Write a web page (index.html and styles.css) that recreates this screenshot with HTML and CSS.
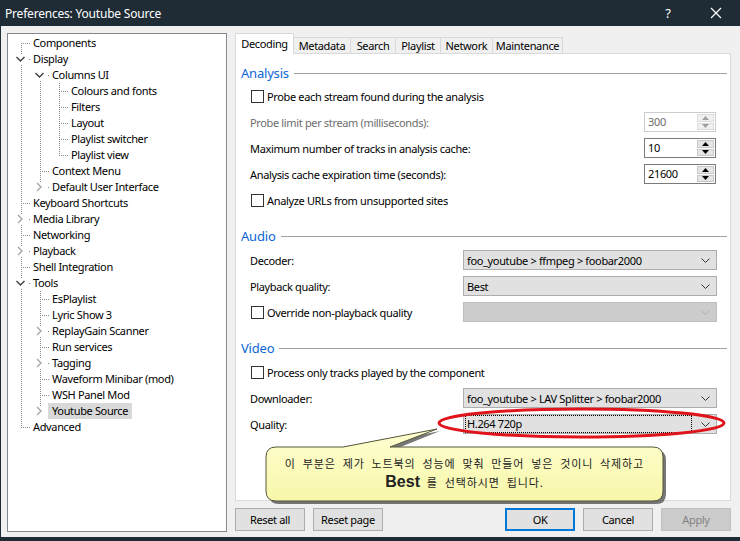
FILE: index.html
```html
<!DOCTYPE html>
<html>
<head>
<meta charset="utf-8">
<title>Preferences: Youtube Source</title>
<link rel="stylesheet" href="styles.css">
</head>
<body>
<div class="window">
  <div class="titlebar">
    <span class="title">Preferences: Youtube Source</span>
    <span class="tb-help">?</span>
    <svg class="tb-close" width="12" height="12" viewBox="0 0 12 12"><path d="M1 1L11 11M11 1L1 11" stroke="#fff" stroke-width="1.2"/></svg>
  </div>
  <div class="client">
    <div class="tree">
      <div class="row"><span class="g f"></span><span class="lbl">Components</span></div>
      <div class="row"><span class="g ch ct cb"><svg width="19" height="16"><polyline points="4.5,6 8.5,10 12.5,6" fill="none" stroke="#404040" stroke-width="1.4"/></svg></span><span class="lbl">Display</span></div>
      <div class="row"><span class="g v"></span><span class="g ch cb"><svg width="19" height="16"><polyline points="4.5,6 8.5,10 12.5,6" fill="none" stroke="#404040" stroke-width="1.4"/></svg></span><span class="lbl">Columns UI</span></div>
      <div class="row"><span class="g v"></span><span class="g v"></span><span class="g t"></span><span class="lbl">Colours and fonts</span></div>
      <div class="row"><span class="g v"></span><span class="g v"></span><span class="g t"></span><span class="lbl">Filters</span></div>
      <div class="row"><span class="g v"></span><span class="g v"></span><span class="g t"></span><span class="lbl">Layout</span></div>
      <div class="row"><span class="g v"></span><span class="g v"></span><span class="g t"></span><span class="lbl">Playlist switcher</span></div>
      <div class="row"><span class="g v"></span><span class="g v"></span><span class="g l"></span><span class="lbl">Playlist view</span></div>
      <div class="row"><span class="g v"></span><span class="g t"></span><span class="lbl">Context Menu</span></div>
      <div class="row"><span class="g v"></span><span class="g ch ct"><svg width="19" height="16"><polyline points="6,4 10,8 6,12" fill="none" stroke="#a6a6a6" stroke-width="1.4"/></svg></span><span class="lbl">Default User Interface</span></div>
      <div class="row"><span class="g t"></span><span class="lbl">Keyboard Shortcuts</span></div>
      <div class="row"><span class="g ch ct cb"><svg width="19" height="16"><polyline points="6,4 10,8 6,12" fill="none" stroke="#a6a6a6" stroke-width="1.4"/></svg></span><span class="lbl">Media Library</span></div>
      <div class="row"><span class="g t"></span><span class="lbl">Networking</span></div>
      <div class="row"><span class="g ch ct cb"><svg width="19" height="16"><polyline points="6,4 10,8 6,12" fill="none" stroke="#a6a6a6" stroke-width="1.4"/></svg></span><span class="lbl">Playback</span></div>
      <div class="row"><span class="g t"></span><span class="lbl">Shell Integration</span></div>
      <div class="row"><span class="g ch ct cb"><svg width="19" height="16"><polyline points="4.5,6 8.5,10 12.5,6" fill="none" stroke="#404040" stroke-width="1.4"/></svg></span><span class="lbl">Tools</span></div>
      <div class="row"><span class="g v"></span><span class="g t"></span><span class="lbl">EsPlaylist</span></div>
      <div class="row"><span class="g v"></span><span class="g t"></span><span class="lbl">Lyric Show 3</span></div>
      <div class="row"><span class="g v"></span><span class="g ch ct cb"><svg width="19" height="16"><polyline points="6,4 10,8 6,12" fill="none" stroke="#a6a6a6" stroke-width="1.4"/></svg></span><span class="lbl">ReplayGain Scanner</span></div>
      <div class="row"><span class="g v"></span><span class="g t"></span><span class="lbl">Run services</span></div>
      <div class="row"><span class="g v"></span><span class="g ch ct cb"><svg width="19" height="16"><polyline points="6,4 10,8 6,12" fill="none" stroke="#a6a6a6" stroke-width="1.4"/></svg></span><span class="lbl">Tagging</span></div>
      <div class="row"><span class="g v"></span><span class="g t"></span><span class="lbl">Waveform Minibar (mod)</span></div>
      <div class="row"><span class="g v"></span><span class="g t"></span><span class="lbl">WSH Panel Mod</span></div>
      <div class="row"><span class="g v"></span><span class="g ch ct"><svg width="19" height="16"><polyline points="6,4 10,8 6,12" fill="none" stroke="#a6a6a6" stroke-width="1.4"/></svg></span><span class="lbl sel">Youtube Source</span></div>
      <div class="row"><span class="g l"></span><span class="lbl">Advanced</span></div>
    </div>

    <div class="right">
      <div class="tabs">
        <div class="tab active w59">Decoding</div>
        <div class="tab w57">Metadata</div>
        <div class="tab w45">Search</div>
        <div class="tab w45">Playlist</div>
        <div class="tab w52">Network</div>
        <div class="tab w70">Maintenance</div>
      </div>
      <div class="panel">
        <div class="hdr first"><span class="hdr-t">Analysis</span><span class="hdr-line"></span></div>
        <div class="frow h25"><label class="chk"><span class="box"></span>Probe each stream found during the analysis</label></div>
        <div class="frow"><span class="lab dis">Probe limit per stream (milliseconds):</span>
          <div class="spin disabled"><span class="spin-val">300</span><span class="spin-btns"><span class="sb"><svg width="7" height="4"><polygon points="0,4 3.5,0 7,4" fill="#a0a0a0"/></svg></span><span class="sb"><svg width="7" height="4"><polygon points="0,0 3.5,4 7,0" fill="#a0a0a0"/></svg></span></span></div>
        </div>
        <div class="frow"><span class="lab">Maximum number of tracks in analysis cache:</span>
          <div class="spin"><span class="spin-val">10</span><span class="spin-btns"><span class="sb"><svg width="7" height="4"><polygon points="0,4 3.5,0 7,4" fill="#000"/></svg></span><span class="sb"><svg width="7" height="4"><polygon points="0,0 3.5,4 7,0" fill="#000"/></svg></span></span></div>
        </div>
        <div class="frow"><span class="lab">Analysis cache expiration time (seconds):</span>
          <div class="spin"><span class="spin-val">21600</span><span class="spin-btns"><span class="sb"><svg width="7" height="4"><polygon points="0,4 3.5,0 7,4" fill="#000"/></svg></span><span class="sb"><svg width="7" height="4"><polygon points="0,0 3.5,4 7,0" fill="#000"/></svg></span></span></div>
        </div>
        <div class="frow"><label class="chk"><span class="box"></span>Analyze URLs from unsupported sites</label></div>

        <div class="hdr"><span class="hdr-t">Audio</span><span class="hdr-line"></span></div>
        <div class="frow"><span class="lab">Decoder:</span>
          <div class="combo"><span class="combo-t">foo_youtube &gt; ffmpeg &gt; foobar2000</span><svg class="combo-arr" width="9" height="5"><polyline points="0.5,0.5 4.5,4.5 8.5,0.5" fill="none" stroke="#333"/></svg></div>
        </div>
        <div class="frow"><span class="lab">Playback quality:</span>
          <div class="combo"><span class="combo-t">Best</span><svg class="combo-arr" width="9" height="5"><polyline points="0.5,0.5 4.5,4.5 8.5,0.5" fill="none" stroke="#333"/></svg></div>
        </div>
        <div class="frow"><label class="chk"><span class="box"></span>Override non-playback quality</label>
          <div class="combo disabled"><span class="combo-t"></span><svg class="combo-arr" width="9" height="5"><polyline points="0.5,0.5 4.5,4.5 8.5,0.5" fill="none" stroke="#b0b0b0"/></svg></div>
        </div>

        <div class="hdr"><span class="hdr-t">Video</span><span class="hdr-line"></span></div>
        <div class="frow"><label class="chk"><span class="box"></span>Process only tracks played by the component</label></div>
        <div class="frow"><span class="lab">Downloader:</span>
          <div class="combo"><span class="combo-t">foo_youtube &gt; LAV Splitter &gt; foobar2000</span><svg class="combo-arr" width="9" height="5"><polyline points="0.5,0.5 4.5,4.5 8.5,0.5" fill="none" stroke="#333"/></svg></div>
        </div>
        <div class="frow"><span class="lab">Quality:</span>
          <div class="combo focus"><span class="combo-t">H.264 720p</span><svg class="combo-arr" width="9" height="5"><polyline points="0.5,0.5 4.5,4.5 8.5,0.5" fill="none" stroke="#333"/></svg></div>
        </div>
      </div>
      <div class="buttons">
        <button class="btn">Reset all</button>
        <button class="btn">Reset page</button>
        <span class="spacer"></span>
        <button class="btn default">OK</button>
        <button class="btn">Cancel</button>
        <button class="btn disabled">Apply</button>
      </div>
    </div>
  </div>

  <svg class="annot" width="740" height="541" viewBox="0 0 740 541">
    <defs>
      <linearGradient id="yel" x1="0" y1="0" x2="0" y2="1">
        <stop offset="0" stop-color="#ffffd2"/>
        <stop offset="1" stop-color="#f7f7aa"/>
      </linearGradient>
    </defs>
    <ellipse cx="581.5" cy="423" rx="142.5" ry="14" fill="none" stroke="#e0141b" stroke-width="3"/>
    <path d="M279 450 L346 450 L440 431 L393 450 L656 450 Q666 450 666 460 L666 494 Q666 504 656 504 L279 504 Q269 504 269 494 L269 460 Q269 450 279 450 Z" fill="#4a4a4a" opacity="0.75"/>
    <path d="M276 447 L343 447 L437 429 L390 447 L653 447 Q663 447 663 457 L663 491 Q663 501 653 501 L276 501 Q266 501 266 491 L266 457 Q266 447 276 447 Z" fill="url(#yel)" stroke="#55553a" stroke-width="1"/>
  </svg>
  <div class="callout-text">
    <div class="ct1">이 부분은 제가 노트북의 성능에 맞춰 만들어 넣은 것이니 삭제하고</div>
    <div class="ct2"><b>Best</b> 를 선택하시면 됩니다.</div>
  </div>
</div>
</body>
</html>
```

FILE: styles.css
```css
* { box-sizing: border-box; }
html, body { margin: 0; padding: 0; }
body {
  font-family: "Noto Sans", "Open Sans", sans-serif;
  font-size: 11px;
  letter-spacing: -0.35px;
  color: #000;
  background: #1f2c36;
}
.window {
  position: relative;
  width: 740px;
  height: 541px;
  background: #1f2c36;
  display: flex;
  flex-direction: column;
  overflow: hidden;
}
.titlebar {
  height: 26px;
  flex: none;
  display: flex;
  align-items: center;
  color: #fff;
  padding-left: 5px;
}
.title { font-size: 12px; flex: 1; letter-spacing: -0.2px; }
.tb-help { font-size: 13px; width: 14px; margin-right: 35px; text-align: center; }
.tb-close { margin-right: 18px; }

.client {
  flex: 1;
  margin: 0 0 4px 1px;
  background: #f0f0f0;
  display: grid;
  grid-template-columns: 220px 496px;
  column-gap: 8px;
  padding: 7px 0 0 6px;
}

/* tree */
.tree {
  height: 499px;
  background: #fff;
  border: 1px solid #828790;
  padding: 1px 0 0 4px;
}
.row { display: flex; height: 16px; align-items: center; white-space: nowrap; }
.g {
  flex: none;
  width: 19px;
  height: 16px;
  background-repeat: no-repeat;
}
.g svg { display: block; }
.v {
  background-image: repeating-linear-gradient(to bottom, #8a8a8a 0 1px, transparent 1px 2px);
  background-size: 1px 16px;
  background-position: 9px 0;
}
.t {
  background-image:
    repeating-linear-gradient(to bottom, #8a8a8a 0 1px, transparent 1px 2px),
    repeating-linear-gradient(to right, #8a8a8a 0 1px, transparent 1px 2px);
  background-size: 1px 16px, 9px 1px;
  background-position: 9px 0, 11px 8px;
}
.l {
  background-image:
    repeating-linear-gradient(to bottom, #8a8a8a 0 1px, transparent 1px 2px),
    repeating-linear-gradient(to right, #8a8a8a 0 1px, transparent 1px 2px);
  background-size: 1px 9px, 9px 1px;
  background-position: 9px 0, 11px 8px;
}
.f {
  background-image:
    repeating-linear-gradient(to bottom, #8a8a8a 0 1px, transparent 1px 2px),
    repeating-linear-gradient(to right, #8a8a8a 0 1px, transparent 1px 2px);
  background-size: 1px 8px, 9px 1px;
  background-position: 9px 8px, 11px 8px;
}
.ch {
  background-image: repeating-linear-gradient(to right, #8a8a8a 0 1px, transparent 1px 2px);
  background-size: 1px 1px;
  background-position: 17px 8px;
}
.ch.ct {
  background-image:
    repeating-linear-gradient(to right, #8a8a8a 0 1px, transparent 1px 2px),
    repeating-linear-gradient(to bottom, #8a8a8a 0 1px, transparent 1px 2px);
  background-size: 1px 1px, 1px 3px;
  background-position: 17px 8px, 9px 0;
}
.ch.cb {
  background-image:
    repeating-linear-gradient(to right, #8a8a8a 0 1px, transparent 1px 2px),
    repeating-linear-gradient(to bottom, #8a8a8a 0 1px, transparent 1px 2px);
  background-size: 1px 1px, 1px 3px;
  background-position: 17px 8px, 9px 14px;
}
.ch.ct.cb {
  background-image:
    repeating-linear-gradient(to right, #8a8a8a 0 1px, transparent 1px 2px),
    repeating-linear-gradient(to bottom, #8a8a8a 0 1px, transparent 1px 2px),
    repeating-linear-gradient(to bottom, #8a8a8a 0 1px, transparent 1px 2px);
  background-size: 1px 1px, 1px 3px, 1px 3px;
  background-position: 17px 8px, 9px 0, 9px 14px;
}
.lbl {
  margin-left: -2px;
  padding: 0 4px;
  height: 16px;
  line-height: 16px;
}
.lbl.sel { background: #d9d9d9; }

/* right side */
.right { display: flex; flex-direction: column; }
.tabs { display: flex; height: 20px; align-items: flex-end; position: relative; z-index: 1; }
.tab {
  height: 16px;
  border: 1px solid #d9d9d9;
  border-bottom: none;
  border-left: none;
  background: #f0f0f0;
  text-align: center;
  line-height: 15px;
}
.tab.active {
  height: 21px;
  margin-bottom: -1px;
  background: #fff;
  border-left: 1px solid #d9d9d9;
  line-height: 19px;
  padding-bottom: 2px;
}
.w59 { width: 59px; }
.w57 { width: 57px; }
.w45 { width: 45px; }
.w52 { width: 52px; }
.w70 { width: 70px; }

.panel {
  height: 448px;
  background: #fff;
  border: 1px solid #d9d9d9;
  padding: 8px 0 0 0;
  display: flex;
  flex-direction: column;
}
.hdr {
  display: flex;
  align-items: center;
  height: 22px;
  padding: 0 3px 0 5px;
  margin-top: 12px;
}
.hdr.first { margin-top: 0; }
.hdr-t { color: #0a66d6; font-size: 13px; letter-spacing: -0.2px; }
.hdr-line { flex: 1; height: 1px; background: #a0a0a0; margin-left: 5px; }

.frow {
  display: flex;
  align-items: center;
  justify-content: space-between;
  height: 26px;
  padding: 0 13px 0 14px;
  flex: none;
}
.frow.h25 { height: 25px; }
.lab.dis { color: #6d6d6d; }
.chk { display: flex; align-items: center; }
.box {
  width: 13px;
  height: 13px;
  border: 1px solid #333;
  background: #fff;
  margin: 0 3px 0 1px;
}

.spin {
  display: flex;
  width: 72px;
  height: 20px;
  border: 1px solid #7a7a7a;
  margin-right: 1px;
  background: #fff;
}
.spin.disabled { border-color: #cccccc; color: #6d6d6d; }
.spin-val { flex: 1; padding-left: 3px; line-height: 18px; }
.spin-btns { width: 18px; display: flex; flex-direction: column; padding: 1px 1px 1px 0; gap: 1px; }
.sb {
  flex: 1;
  background: #e5e5e5;
  border: 1px solid #c8c8c8;
  display: flex;
  align-items: center;
  justify-content: center;
}
.sb svg { display: block; }
.spin.disabled .sb { background: #f0f0f0; border-color: #dcdcdc; }

.combo {
  width: 254px;
  height: 20px;
  background: #e1e1e1;
  border: 1px solid #adadad;
  display: flex;
  align-items: center;
  padding: 0 6px 0 3px;
}
.combo-t { flex: 1; white-space: nowrap; }
.combo-arr { display: block; }
.combo.disabled { background: #cccccc; border-color: #bfbfbf; }
.combo.focus .combo-t {
  outline: 1px dotted #000;
  margin: 0 10px 0 -1px;
  padding-left: 1px;
  height: 16px;
  line-height: 16px;
}

.buttons {
  display: flex;
  gap: 8px;
  margin-top: 7px;
  height: 23px;
}
.spacer { flex: 1; }
.btn {
  width: 70px;
  height: 23px;
  font: inherit;
  letter-spacing: inherit;
  color: #000;
  background: #e1e1e1;
  border: 1px solid #adadad;
  padding: 0;
}
.btn.default { border: 2px solid #0078d7; }
.btn.disabled { background: #cccccc; border-color: #bfbfbf; color: #838383; }

/* annotation overlay */
.annot { position: absolute; left: 0; top: 0; pointer-events: none; }
.callout-text {
  position: absolute;
  left: 266px;
  top: 447px;
  width: 397px;
  height: 54px;
  display: flex;
  flex-direction: column;
  align-items: center;
  justify-content: center;
  font-family: "Noto Sans CJK KR", "Noto Sans", sans-serif;
  font-size: 11px;
  letter-spacing: 0.9px;
  word-spacing: 3.5px;
  color: #222;
  padding-bottom: 2px;
}
.ct1 { line-height: 18px; }
.ct2 { line-height: 20px; }
.ct2 b { font-family: "Liberation Sans", Arial, sans-serif; font-size: 16px; letter-spacing: 0; }
```
